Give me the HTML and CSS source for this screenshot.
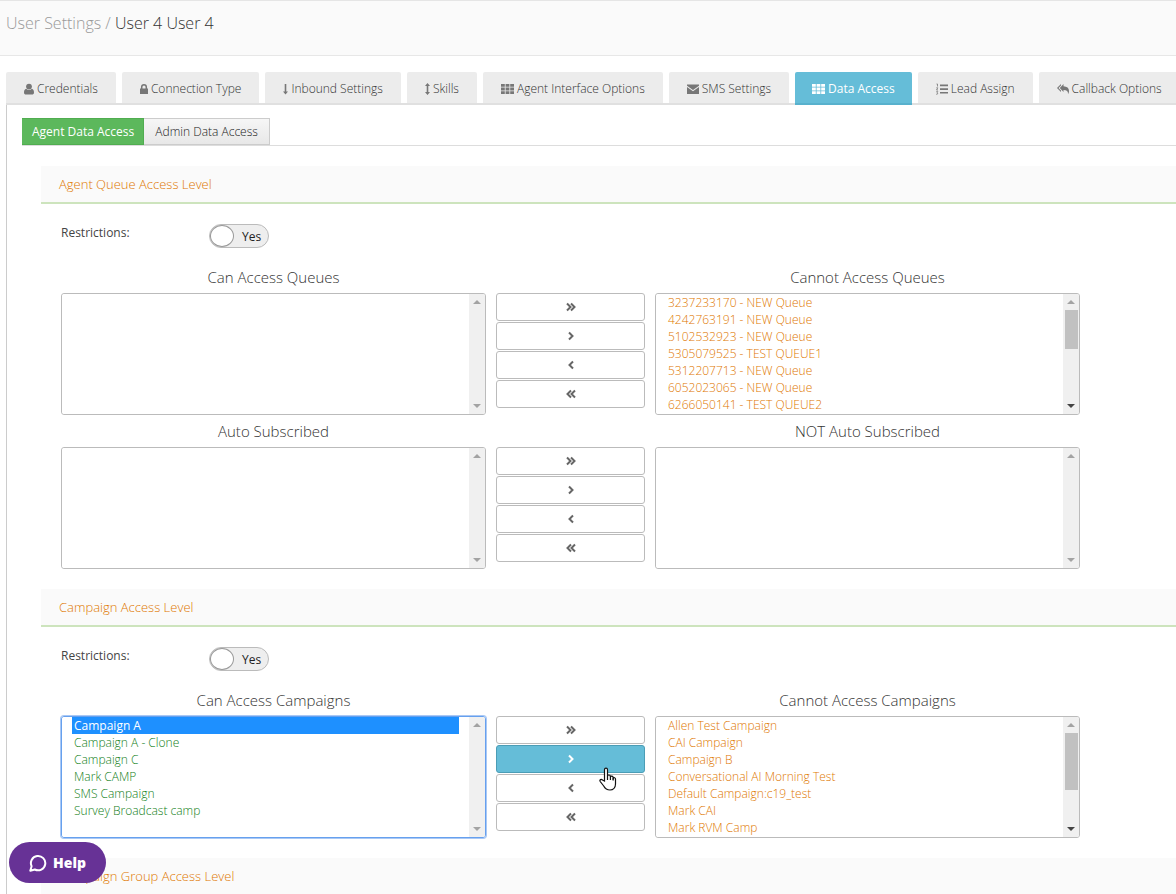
FILE: index.html
```
<!DOCTYPE html>
<html lang="en">
<head>
  <meta charset="utf-8">
  <meta name="viewport" content="width=device-width, initial-scale=1">
  <title>User Settings / User 4 User 4</title>
  <link rel="stylesheet" href="styles.css">
</head>
<body>
  <!-- icon shapes, used below -->
  <svg class="sprite" aria-hidden="true">
    <symbol id="i-user" viewBox="0 0 10 12"><circle cx="5" cy="3.6" r="2.9"/><path d="M2.2 5.8C.7 6.2 0 7.6 0 9.4 0 10.700.8 11.500 2 11.500h6c1.200 0 2-.8 2-2.100 0-1.800-.7-3.200-2.200-3.600C7 6.600 6 7 5 7S3 6.600 2.200 5.800z"/></symbol>
    <symbol id="i-lock" viewBox="0 0 8 12"><path d="M0 5.500h8V11H0z"/><path d="M1.700 6V4a2.300 2.300 0 0 1 4.600 0v2" fill="none" stroke="currentColor" stroke-width="1.500"/></symbol>
    <symbol id="i-down" viewBox="0 0 5 12"><path d="M1.700 1h1.600v7.500H5L2.500 11.500 0 8.500h1.700z"/></symbol>
    <symbol id="i-updown" viewBox="0 0 5 12"><path d="M2.500 0 5 3H3.300v6H5l-2.500 3L0 9h1.700V3H0z"/></symbol>
    <symbol id="i-grid" viewBox="0 0 13 12"><path d="M0 1h3.800v2.800H0zM4.600 1h3.800v2.800H4.600zM9.200 1H13v2.800H9.200zM0 4.600h3.800v2.800H0zM4.600 4.600h3.800v2.800H4.600zM9.200 4.600H13v2.800H9.200zM0 8.200h3.800V11H0zM4.600 8.200h3.800V11H4.600zM9.200 8.200H13V11H9.200z"/></symbol>
    <symbol id="i-mail" viewBox="0 0 12 12"><path d="M0 1.500h12v1.200L6 7 0 2.700zM0 4l6 4.300L12 4v7H0z"/></symbol>
    <symbol id="i-list" viewBox="0 0 12 12"><path d="M4 1.500h8v1.700H4zM4 5.200h8v1.700H4zM4 8.900h8v1.700H4z"/><path d="M.5 1h1v2.500M.3 4.800h1.500L.5 7h1.500M.3 8.600h1.500L1 9.700l.8.5-.5 1H.2" fill="none" stroke="currentColor" stroke-width=".8"/></symbol>
    <symbol id="i-reply" viewBox="0 0 12 12"><path d="M6.500 1v2.200c3.500.2 5.500 1.800 5.500 4.800 0 1.200-.4 2.300-1 3 .3-3-1.200-4-4.500-4.100V9L2.800 5z"/><path d="M4 1v1.500L1.500 5 4 7.500V9L0 5z"/></symbol>
    <symbol id="i-right" viewBox="0 0 10 10"><path d="m3 1.500 3.500 3.500L3 8.500" class="chev"/></symbol>
    <symbol id="i-left" viewBox="0 0 10 10"><path d="M7 1.500 3.500 5 7 8.500" class="chev"/></symbol>
    <symbol id="i-dright" viewBox="0 0 10 10"><path d="m1 1.500 3.500 3.500L1 8.500M5 1.500 8.500 5 5 8.500" class="chev"/></symbol>
    <symbol id="i-dleft" viewBox="0 0 10 10"><path d="M5 1.500 1.500 5 5 8.500M9 1.500 5.500 5 9 8.500" class="chev"/></symbol>
  </svg>

  <header class="page-header">
    <h1><a href="#">User Settings</a> <span>/</span> User 4 User 4</h1>
  </header>

  <nav class="tabs">
    <a href="#"><svg class="w10"><use href="#i-user"/></svg>Credentials</a>
    <a href="#"><svg class="w8"><use href="#i-lock"/></svg>Connection Type</a>
    <a href="#"><svg class="w5"><use href="#i-down"/></svg>Inbound Settings</a>
    <a href="#"><svg class="w5"><use href="#i-updown"/></svg>Skills</a>
    <a href="#"><svg class="w13"><use href="#i-grid"/></svg>Agent Interface Options</a>
    <a href="#"><svg class="w12"><use href="#i-mail"/></svg>SMS Settings</a>
    <a href="#" class="active"><svg class="w13"><use href="#i-grid"/></svg>Data Access</a>
    <a href="#"><svg class="w12"><use href="#i-list"/></svg>Lead Assign</a>
    <a href="#"><svg class="w12"><use href="#i-reply"/></svg>Callback Options</a>
  </nav>

  <main class="panel">
    <div class="subtabs">
      <button type="button" class="active">Agent Data Access</button>
      <button type="button">Admin Data Access</button>
    </div>

    <section class="group">
      <h2>Agent Queue Access Level</h2>
      <div class="restrict">
        <label for="queue-restrict">Restrictions:</label>
        <span class="toggle"><input type="checkbox" id="queue-restrict">Yes</span>
      </div>
      <div class="picker">
        <div class="col">
          <label for="can-queues">Can Access Queues</label>
          <div class="listbox">
            <select id="can-queues" multiple size="7"></select>
            <div class="scrollbar"><i class="up"></i><i class="down"></i></div>
          </div>
        </div>
        <div class="moves">
          <button type="button" aria-label="Move all right"><svg><use href="#i-dright"/></svg></button>
          <button type="button" aria-label="Move right"><svg><use href="#i-right"/></svg></button>
          <button type="button" aria-label="Move left"><svg><use href="#i-left"/></svg></button>
          <button type="button" aria-label="Move all left"><svg><use href="#i-dleft"/></svg></button>
        </div>
        <div class="col">
          <label for="cannot-queues">Cannot Access Queues</label>
          <div class="listbox">
            <select id="cannot-queues" class="denied" multiple size="7">
              <option>3237233170 - NEW Queue</option>
              <option>4242763191 - NEW Queue</option>
              <option>5102532923 - NEW Queue</option>
              <option>5305079525 - TEST QUEUE1</option>
              <option>5312207713 - NEW Queue</option>
              <option>6052023065 - NEW Queue</option>
              <option>6266050141 - TEST QUEUE2</option>
            </select>
            <div class="scrollbar"><i class="up"></i><b class="thumb short"></b><i class="down on"></i></div>
          </div>
        </div>
      </div>
      <div class="picker">
        <div class="col">
          <label for="auto-sub">Auto Subscribed</label>
          <div class="listbox">
            <select id="auto-sub" multiple size="7"></select>
            <div class="scrollbar"><i class="up"></i><i class="down"></i></div>
          </div>
        </div>
        <div class="moves">
          <button type="button" aria-label="Move all right"><svg><use href="#i-dright"/></svg></button>
          <button type="button" aria-label="Move right"><svg><use href="#i-right"/></svg></button>
          <button type="button" aria-label="Move left"><svg><use href="#i-left"/></svg></button>
          <button type="button" aria-label="Move all left"><svg><use href="#i-dleft"/></svg></button>
        </div>
        <div class="col">
          <label for="not-auto-sub">NOT Auto Subscribed</label>
          <div class="listbox">
            <select id="not-auto-sub" multiple size="7"></select>
            <div class="scrollbar"><i class="up"></i><i class="down"></i></div>
          </div>
        </div>
      </div>
    </section>

    <section class="group">
      <h2>Campaign Access Level</h2>
      <div class="restrict">
        <label for="camp-restrict">Restrictions:</label>
        <span class="toggle"><input type="checkbox" id="camp-restrict">Yes</span>
      </div>
      <div class="picker">
        <div class="col">
          <label for="can-camps">Can Access Campaigns</label>
          <div class="listbox focused">
            <select id="can-camps" class="allowed" multiple size="7">
              <option selected>Campaign A</option>
              <option>Campaign A - Clone</option>
              <option>Campaign C</option>
              <option>Mark CAMP</option>
              <option>SMS Campaign</option>
              <option>Survey Broadcast camp</option>
            </select>
            <div class="scrollbar"><i class="up"></i><i class="down"></i></div>
          </div>
        </div>
        <div class="moves">
          <button type="button" aria-label="Move all right"><svg><use href="#i-dright"/></svg></button>
          <button type="button" class="hover" aria-label="Move right"><svg><use href="#i-right"/></svg>
            <svg class="pointer" viewBox="0 0 18 24"><path d="M5.500 14V2.700c0-2.200 3-2.200 3 0V9c.3-1.400 2.700-1.300 2.900.2v.8c.4-1.300 2.600-1 2.800.5v.8c.6-1 2.300-.7 2.300.8V17c0 3.500-2.300 6-5.500 6-3.200 0-5-1.500-6.300-4L1.200 14.500c-1-1.700 1-2.800 2.300-1.500z"/><path d="M8.500 9v4M11.400 9.500V13M14.200 10.500V13.500"/></svg>
          </button>
          <button type="button" aria-label="Move left"><svg><use href="#i-left"/></svg></button>
          <button type="button" aria-label="Move all left"><svg><use href="#i-dleft"/></svg></button>
        </div>
        <div class="col">
          <label for="cannot-camps">Cannot Access Campaigns</label>
          <div class="listbox">
            <select id="cannot-camps" class="denied" multiple size="7">
              <option>Allen Test Campaign</option>
              <option>CAI Campaign</option>
              <option>Campaign B</option>
              <option>Conversational AI Morning Test</option>
              <option>Default Campaign:c19_test</option>
              <option>Mark CAI</option>
              <option>Mark RVM Camp</option>
            </select>
            <div class="scrollbar"><i class="up"></i><b class="thumb"></b><i class="down on"></i></div>
          </div>
        </div>
      </div>
    </section>

    <section class="group">
      <h2>Campaign Group Access Level</h2>
    </section>
  </main>

  <button type="button" class="help">
    <svg viewBox="0 0 18 18"><path d="M2.600 12.200A7.200 7.200 0 1 1 5.800 15.500L1.300 16.700z"/></svg>
    Help
  </button>
</body>
</html>
```
FILE: styles.css
```
* {
box-sizing: border-box;
}

body {
margin: 0;
background: #fff;
color: #444;
font-family: "Open Sans", sans-serif;
font-size: 12px;
line-height: 17px;
overflow-x: hidden;
}

button, select, input {
font: inherit;
}

svg {
fill: currentColor;
flex: none;
}

.sprite {
display: none;
}

.chev {
fill: none;
stroke: currentColor;
stroke-width: 2;
}

.page-header {
height: 56px;
padding: 11px 6px;
background: #fafafa;
border-top: 1px solid #e5e5e5;
border-bottom: 1px solid #e7e7e7;
}

.page-header h1 {
margin: 0;
font-size: 16px;
font-weight: 300;
line-height: 22px;
color: #333;
}

.page-header a, .page-header span {
color: #999;
text-decoration: none;
}

/* top tabs */
.tabs {
display: flex;
gap: 6px;
margin: 16px 0 0 6px;
box-shadow: inset 0 -2px #e0e0e0;
}

.tabs a {
flex: none;
display: flex;
align-items: center;
gap: 3px;
height: 33px;
padding: 2px 18px 0;
background: #ececec;
border-bottom: 2px solid #e0e0e0;
border-radius: 2px 2px 0 0;
color: #333;
font-weight: 300;
text-decoration: none;
white-space: nowrap;
}

.tabs a.active {
padding: 2px 17px 0;
background: #65bdd8;
border-color: #58b1cd;
color: #fff;
font-weight: 400;
}

.tabs svg {
height: 12px;
color: #777;
}

.tabs .active svg {
color: #fff;
}

.w5 { width: 5px; }
.w8 { width: 8px; }
.w10 { width: 10px; }
.w12 { width: 12px; }
.w13 { width: 13px; }

.panel {
margin-left: 6px;
padding: 13px 0 0 15px;
border-left: 1px solid #ccc;
}

.subtabs {
display: flex;
border-bottom: 1px solid #ddd;
}

.subtabs button {
height: 27px;
padding: 0 11px;
border: 1px solid #ccc;
border-left: 0;
background: linear-gradient(#f6f6f6, #e8e8e8);
color: #222;
font-weight: 300;
}

.subtabs .active {
padding: 0 9px 0 10px;
background: #5cb85c;
border-color: #50ad50;
color: #fff;
font-weight: 400;
}

/* one access level block */
.group {
margin: 20px 0 0 19px;
}

.group h2 {
margin: 0;
height: 38px;
padding: 0 18px;
background: #fafafa;
border-bottom: 2px solid #cde4bd;
color: #e07800;
font-size: 13px;
font-weight: 300;
line-height: 36px;
}

.restrict {
display: flex;
align-items: flex-start;
padding: 20px 20px 0;
height: 62px;
}

.restrict label {
width: 148px;
}

.toggle {
display: flex;
align-items: center;
gap: 8px;
height: 24px;
padding-right: 7px;
border: 1px solid #bbb;
border-radius: 12px;
background: #eee;
color: #222;
}

.toggle input {
appearance: none;
width: 24px;
height: 22px;
margin: 0;
border: 1px solid #999;
border-radius: 50%;
background: #fff;
}

.picker {
display: grid;
grid-template-columns: 1fr 149px 1fr;
gap: 10px;
margin: 0 96px 5px 20px;
}

.col > label {
display: block;
height: 27px;
font-size: 15px;
font-weight: 300;
line-height: 22px;
text-align: center;
color: #333;
}

.listbox {
display: flex;
height: 122px;
border: 1px solid #bbb;
border-radius: 3px;
overflow: hidden;
}

.listbox.focused {
border-color: #66a0ee;
box-shadow: 0 0 0 1px #a9c8f5;
}

.listbox select {
flex: 1;
min-width: 0;
height: 120px;
padding: 0 10px;
border: 0;
outline: 0;
background: #fff;
overflow: hidden;
scrollbar-width: none;
}

.listbox option {
height: 17px;
min-height: 17px;
padding: 0 2px;
font-weight: 300;
}

.denied option {
color: #e07800;
}

.allowed option {
color: #128018;
}

.allowed option:checked {
background: #1e90ff linear-gradient(#1e90ff, #1e90ff);
color: #fff;
font-weight: 400;
}

.scrollbar {
display: flex;
flex-direction: column;
align-items: center;
width: 16px;
padding: 6px 0;
background: #f0f0f0;
}

.up, .down {
border: 4px solid transparent;
}

.up {
border-top: 0;
border-bottom-color: #a3a3a3;
}

.down {
margin-top: auto;
border-bottom: 0;
border-top-color: #a3a3a3;
}

.down.on {
border-top-color: #444;
}

.thumb {
width: 13px;
height: 57px;
margin-top: 6px;
background: #c1c1c1;
}

.thumb.short {
height: 39px;
}

.moves {
display: flex;
flex-direction: column;
gap: 1px;
padding-top: 27px;
}

.moves button {
position: relative;
display: flex;
align-items: center;
justify-content: center;
height: 28px;
padding: 0;
border: 1px solid #bbb;
border-radius: 3px;
background: #fff;
color: #666;
}

.moves .hover {
background: #65bdd8;
border-color: #4b9db6;
color: #fff;
}

.moves svg {
width: 10px;
height: 10px;
}

/* hand cursor over the pressed button */
.moves .pointer {
position: absolute;
left: 102px;
top: 21px;
z-index: 1;
width: 18px;
height: 24px;
fill: #fff;
stroke: #111;
stroke-width: 1.2;
}

.help {
position: fixed;
left: 9px;
bottom: 11px;
display: flex;
align-items: center;
gap: 6px;
height: 41px;
padding: 0 20px;
border: 0;
border-radius: 21px;
background: #673296;
color: #fff;
font-size: 14px;
font-weight: 800;
}

.help svg {
width: 18px;
height: 18px;
fill: none;
stroke: #fff;
stroke-width: 2;
stroke-linejoin: round;
}
```
